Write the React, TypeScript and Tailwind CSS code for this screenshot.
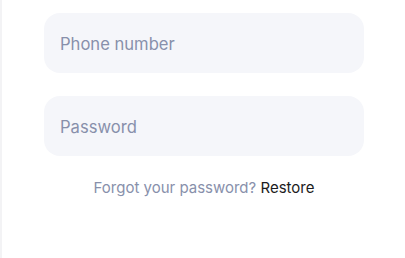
export default function App() {
  return (
    <div
      className="w-[405px] h-[258px] bg-white border-l-2 border-[#f3f3f5] box-border"
      style={{ fontFamily: "Inter, 'Noto Sans', sans-serif" }}
    >
      <div className="flex flex-col pl-[42px] pr-[41px] pt-[13px]">
        <div className="h-[60px] rounded-[16px] bg-[#f5f6fa] flex items-center px-4 pt-[3px]">
          <span className="text-[16.6px] text-[#8890ab]">Phone number</span>
        </div>
        <div className="h-[60px] rounded-[16px] bg-[#f5f6fa] flex items-center px-4 mt-[23px] pt-[3px]">
          <span className="text-[16.6px] text-[#8890ab]">Password</span>
        </div>
        <div className="mt-[20px] text-center text-[15px] leading-6">
          <span className="text-[#8890ab]">Forgot your password? </span>
          <span className="text-[#1c1c22]">Restore</span>
        </div>
      </div>
    </div>
  );
}
